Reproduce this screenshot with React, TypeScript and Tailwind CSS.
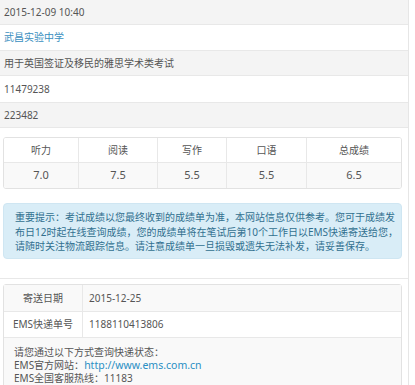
export default function App() {
  const font = { fontFamily: '"Noto Sans", "Noto Sans CJK SC", sans-serif' };
  const scores = [
    { name: '听力', value: '7.0', w: 'w-[75px]' },
    { name: '阅读', value: '7.5', w: 'w-[79px]' },
    { name: '写作', value: '5.5', w: 'w-[69px]' },
    { name: '口语', value: '5.5', w: 'w-[80px]' },
    { name: '总成绩', value: '6.5', w: '' },
  ];

  return (
    <div className="w-[415px] h-[385px] overflow-hidden bg-white text-[10px] text-[#555]" style={font}>
      <div className="w-[409px] border-r border-[#e6e6e6]">
        {/* info rows */}
        <div className="h-[25px] flex items-center pl-1 bg-[#f4f4f4] border-b border-[#e8e8e8]">2015-12-09 10:40</div>
        <div className="h-[26px] flex items-center pl-1 bg-white border-b border-[#e8e8e8] text-[#3a8fc0]">武昌实验中学</div>
        <div className="h-[25px] flex items-center pl-1 bg-[#f4f4f4] border-b border-[#e8e8e8]">用于英国签证及移民的雅思学术类考试</div>
        <div className="h-[27px] flex items-center pl-1 bg-white border-b border-[#e8e8e8]">11479238</div>
        <div className="h-[25px] flex items-center pl-1 bg-[#f4f4f4] border-b border-[#e8e8e8]">223482</div>

        <div className="px-[3px] pt-[9px] pb-[19px] border-b border-[#e8e8e8]">
          {/* scores */}
          <div className="w-[399px] border border-[#e2e2e2] rounded-[3px] overflow-hidden">
            <div className="flex h-[25px] bg-white border-b border-[#e8e8e8]">
              {scores.map((s, i) => (
                <div key={s.name} className={`${s.w || 'flex-1'} flex items-center justify-center ${i < 4 ? 'border-r border-[#e8e8e8]' : ''}`}>
                  {s.name}
                </div>
              ))}
            </div>
            <div className="flex h-[25px] bg-[#f9f9f9] text-[11px]">
              {scores.map((s, i) => (
                <div key={s.name} className={`${s.w || 'flex-1'} flex items-center justify-center ${i < 4 ? 'border-r border-[#e8e8e8]' : ''}`}>
                  {s.value}
                </div>
              ))}
            </div>
          </div>

          {/* notice */}
          <div className="mt-[14px] w-[399px] h-[56px] rounded-[4px] bg-[#d9edf7] border border-[#cfe6f2] text-[#31708f] pl-[11px] pt-[6px] leading-[14.5px] whitespace-nowrap">
            重要提示：考试成绩以您最终收到的成绩单为准，本网站信息仅供参考。您可于成绩发
            <br />
            布日12时起在线查询成绩，您的成绩单将在笔试后第10个工作日以EMS快递寄送给您，
            <br />
            请随时关注物流跟踪信息。请注意成绩单一旦损毁或遗失无法补发，请妥善保存。
          </div>
        </div>

        {/* shipping */}
        <div className="px-[3px] pt-[5px]">
          <div className="w-[399px] border border-[#e2e2e2] rounded-[3px]">
            <div className="flex h-[27px] bg-[#f9f9f9] border-b border-[#e8e8e8]">
              <div className="w-[79px] flex items-center justify-center border-r border-[#e8e8e8]">寄送日期</div>
              <div className="flex items-center pl-[6px]">2015-12-25</div>
            </div>
            <div className="flex h-[26px] bg-white border-b border-[#e8e8e8]">
              <div className="w-[79px] flex items-center justify-center border-r border-[#e8e8e8]">EMS快递单号</div>
              <div className="flex items-center pl-[6px]">1188110413806</div>
            </div>
            <div className="bg-[#f9f9f9] pl-[10px] pt-[8px] pb-2 leading-[13px]">
              <div>请您通过以下方式查询快递状态：</div>
              <div>
                EMS官方网站：<span className="text-[#2a8fc4] text-[10.5px]">http://www.ems.com.cn</span>
              </div>
              <div>EMS全国客服热线：11183</div>
            </div>
          </div>
        </div>
      </div>
    </div>
  );
}
